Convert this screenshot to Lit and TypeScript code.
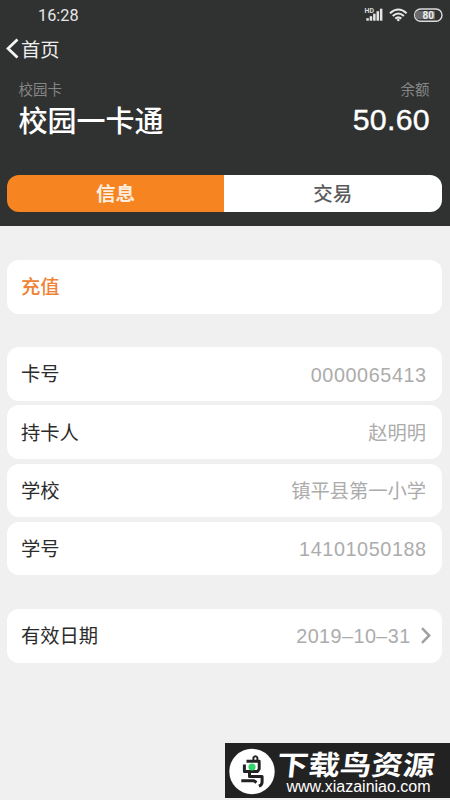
import { LitElement, html, css, svg } from "lit";
import { customElement, property } from "lit/decorators.js";

@customElement("info-row")
class InfoRow extends LitElement {
  @property() label = "";
  @property() value = "";
  @property({ type: Boolean }) accent = false;
  @property({ type: Boolean }) arrow = false;

  static styles = css`
    :host { display: block; }
    .row {
      box-sizing: border-box;
      height: 53.5px;
      padding: 2.6px 15.4px 0 14px;
      border-radius: 12px;
      background: #fff;
      display: flex;
      align-items: center;
      justify-content: space-between;
      font-size: 19.3px;
      line-height: 28px;
      color: #2b2b2b;
    }
    .accent { color: #ee8337; font-weight: 500; }
    .value { color: #acacac; display: flex; align-items: center; }
    .num { letter-spacing: 0.6px; font-size: 19.8px; margin-right: -0.6px; padding-bottom: 1.5px; }
    .date { letter-spacing: 0.45px; }
    .chev { width: 10px; height: 17px; margin: -3px -5px 0 11px; }
  `;

  render() {
    const numeric = /^[\d–]+$/.test(this.value);
    return html`<div class="row">
      <span class=${this.accent ? "accent" : ""}>${this.label}</span>
      <span class="value">
        <span class=${numeric ? (this.arrow ? "num date" : "num") : ""}>${this.value}</span>
        ${this.arrow
          ? html`<svg class="chev" viewBox="0 0 10 17" fill="none" stroke="#a0a0a0" stroke-width="2.5"><path d="M1 1.2 8.2 8.5 1 15.8"/></svg>`
          : ""}
      </span>
    </div>`;
  }
}

@customElement("app-root")
class AppRoot extends LitElement {
  static styles = css`
    :host {
      display: flex;
      flex-direction: column;
      position: relative;
      width: 450px;
      height: 800px;
      overflow: hidden;
      background: #f0f0f0;
      font-family: "Liberation Sans", "Noto Sans CJK SC", sans-serif;
    }
    header {
      box-sizing: border-box;
      height: 226px;
      background: #303231;
      color: #fff;
      flex: none;
    }
    .status {
      height: 31px;
      display: flex;
      align-items: center;
      justify-content: space-between;
      padding: 0 7px 0 38px;
      font: 16.3px/31px Roboto, sans-serif;
      color: #e6e6e6;
    }
    .icons { width: 80px; height: 20px; margin-top: -1px; }
    .nav {
      height: 35px;
      display: flex;
      align-items: center;
      gap: 2px;
      padding-left: 6px;
      font-size: 19.3px;
      color: #eee;
    }
    .back { width: 13px; height: 21px; }
    .summary { display: flex; justify-content: space-between; padding: 13px 20.5px 0 18.5px; }
    .small { font-size: 14.5px; line-height: 23px; height: 22px; color: #868686; }
    .title { font-size: 29px; line-height: 40px; font-weight: 500; padding-top: 1px; }
    .right { text-align: right; }
    .amount { font-size: 30.3px; line-height: 38px; letter-spacing: 0.3px; -webkit-text-stroke: 0.4px #fff; margin-right: -0.5px; }
    .tabs {
      display: flex;
      margin: 33px 8.5px 0 7px;
      height: 36.5px;
      border-radius: 12px;
      overflow: hidden;
      font-size: 19.5px;
      line-height: 39px;
      text-align: center;
    }
    .tab { flex: 1; background: #fff; color: #5a5a5a; font-weight: 500; }
    .on { background: #f68420; color: #ffeee0; font-weight: 700; }
    main { padding: 34px 8.5px 0 7px; }
    .group { display: flex; flex-direction: column; gap: 4.6px; margin-bottom: 33.9px; }
    .mark {
      position: absolute;
      left: 225px;
      top: 743px;
      width: 225px;
      height: 55px;
      background: #222;
      color: #fff;
      display: flex;
    }
    .logo { width: 52px; height: 55px; flex: none; }
    .words { display: flex; flex-direction: column; padding-top: 8px; }
    .brand {
      height: 28px;
      font-size: 31.5px;
      line-height: 29px;
      font-weight: 700;
      white-space: nowrap;
      transform: skewX(-6deg) scaleY(0.87);
    }
    .url { font-size: 16px; line-height: 16px; margin-left: 9.5px; }
  `;

  render() {
    const bars = [2.5, 4.5, 7, 9.5, 12];
    return html`
      <header>
        <div class="status">
          <span>16:28</span>
          <svg class="icons" viewBox="363 5 80 20" fill="none">
            <text x="364.5" y="12.5" font-size="7" font-weight="700" font-family="Roboto" fill="#ddd">HD</text>
            ${bars.map((h, i) => svg`<rect x=${366.3 + i * 3.4} y=${20.7 - h} width="2.5" height=${h} fill="#e4e4e4"/>`)}
            <g stroke="#e6e6e6" stroke-width="2.1">
              <path d="M390 13.2Q398.3 5.8 406.6 13.2"/>
              <path d="M392.7 16Q398.3 11 403.9 16"/>
              <path d="M395.3 18.6Q398.3 16 401.3 18.6"/>
            </g>
            <circle cx="398.3" cy="20" r="1.3" fill="#e6e6e6"/>
            <rect x="414.6" y="9" width="27.4" height="12.2" rx="6" stroke="#dcdcdc" stroke-width="1.4"/>
            <path d="M419 11h16v8.2h-16a4 4 0 0 1 0-8.2z" fill="#6a6a6a"/>
            <text x="428.3" y="18.8" font-size="10" font-weight="700" font-family="Roboto" fill="#eee" text-anchor="middle">80</text>
          </svg>
        </div>
        <div class="nav">
          <svg class="back" viewBox="0 0 13 21" fill="none" stroke="#f4f4f4" stroke-width="2.8"><path d="M11.5 1.5 2 10.5 11.5 19.5"/></svg>
          <span>首页</span>
        </div>
        <div class="summary">
          <div><div class="small">校园卡</div><div class="title">校园一卡通</div></div>
          <div class="right"><div class="small">余额</div><div class="amount">50.60</div></div>
        </div>
        <div class="tabs"><div class="tab on">信息</div><div class="tab">交易</div></div>
      </header>
      <main>
        <div class="group"><info-row label="充值" accent></info-row></div>
        <div class="group">
          <info-row label="卡号" value="0000065413"></info-row>
          <info-row label="持卡人" value="赵明明"></info-row>
          <info-row label="学校" value="镇平县第一小学"></info-row>
          <info-row label="学号" value="14101050188"></info-row>
        </div>
        <div class="group"><info-row label="有效日期" value="2019–10–31" arrow></info-row></div>
      </main>
      <div class="mark">
        <svg class="logo" viewBox="0 0 52 55" fill="none">
          <circle cx="27" cy="28.5" r="22.7" fill="#fff"/>
          <g stroke="#222" stroke-linejoin="round">
            <path d="M28.4 17v-2.5q2-2.6 4 0V17" stroke-width="1.9"/>
            <path d="M21.5 18.3h12.7V26l-2 3" stroke-width="2.9"/>
            <path d="M19.4 21.5v7H33M24.5 29v4.5h12.6V39q0 3-3.2 4.2" stroke-width="3"/>
            <path d="M16.3 37.8H29l2.5 1.6" stroke-width="3"/>
          </g>
          <circle cx="27" cy="24" r="3.6" fill="#2fd568"/>
        </svg>
        <div class="words"><div class="brand">下载鸟资源</div><div class="url">www.xiazainiao.com</div></div>
      </div>
    `;
  }
}
